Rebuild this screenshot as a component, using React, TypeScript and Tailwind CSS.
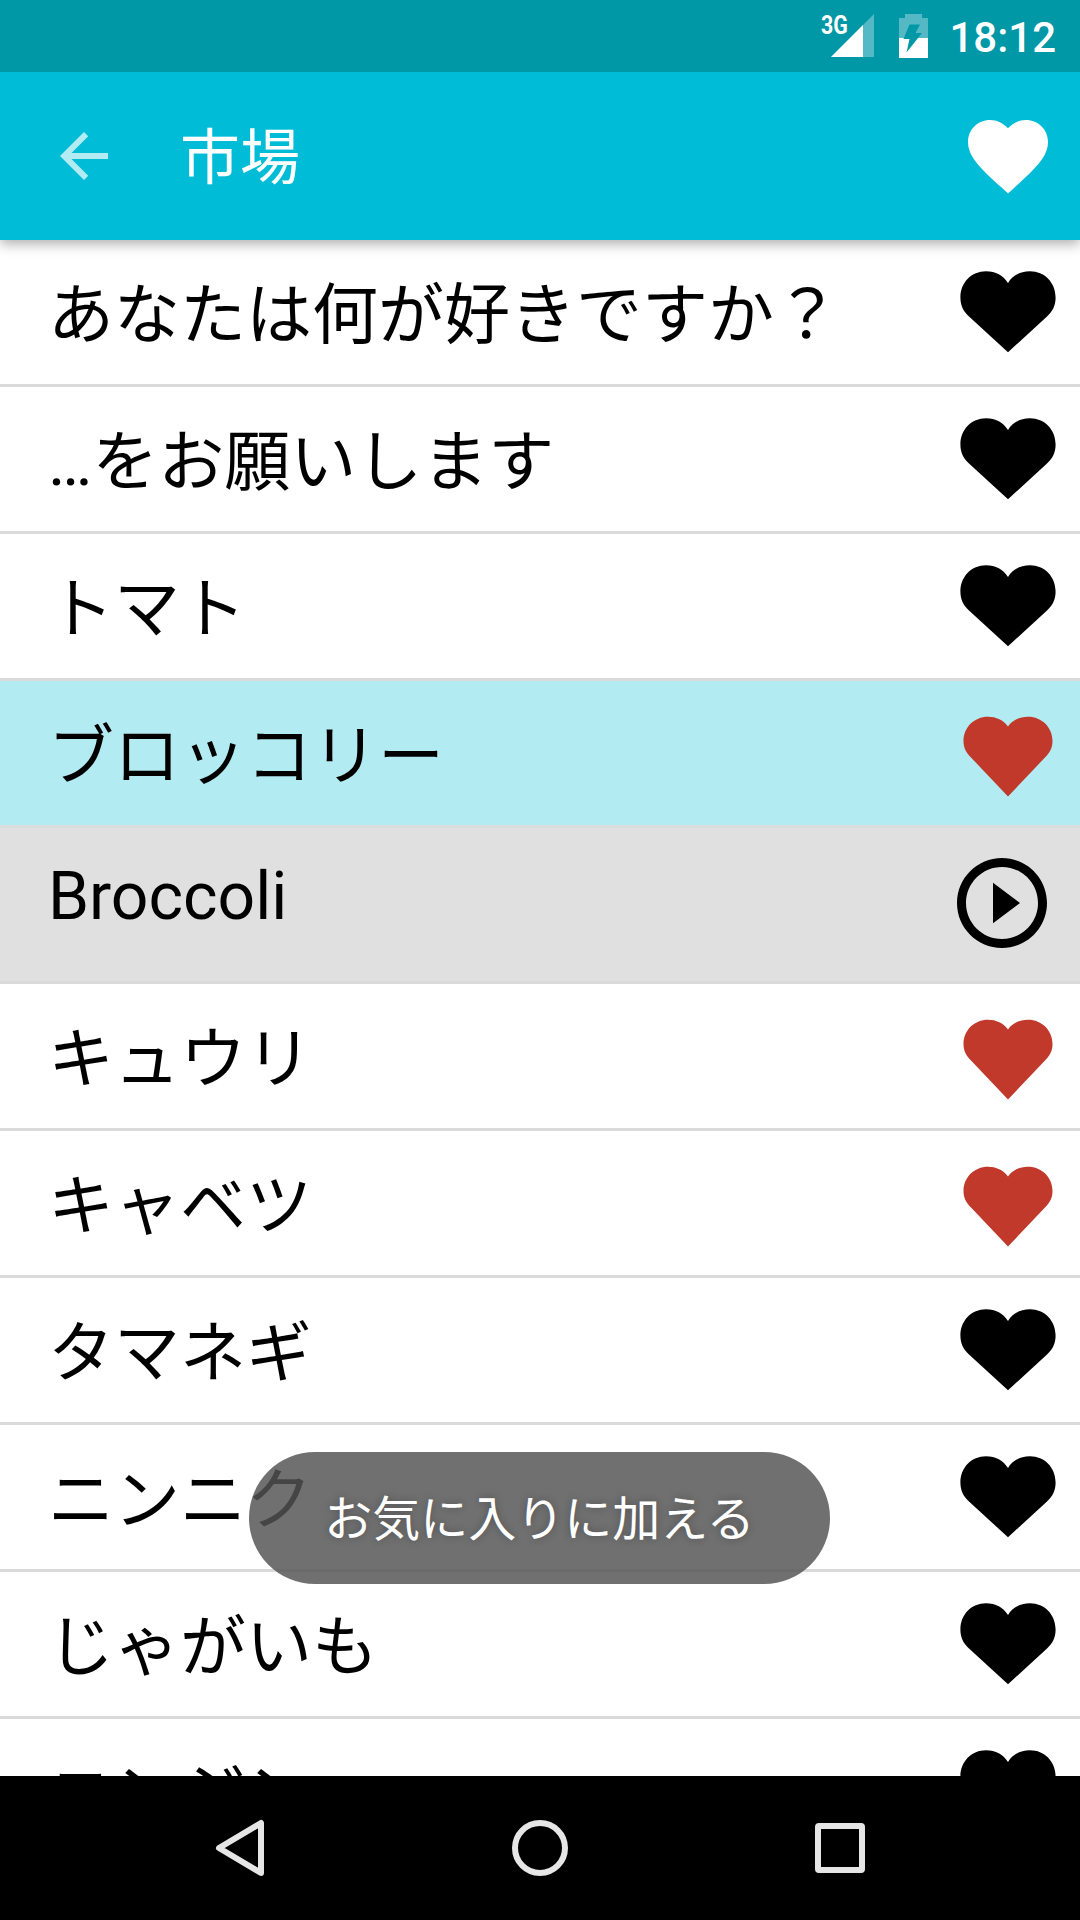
const items = [
    { text: "あなたは何が好きですか？", fav: false },
    { text: "…をお願いします", fav: false },
    { text: "トマト", fav: false },
    { text: "ブロッコリー", fav: true, translation: "Broccoli" },
    { text: "キュウリ", fav: true },
    { text: "キャベツ", fav: true },
    { text: "タマネギ", fav: false },
    { text: "ニンニク", fav: false },
    { text: "じゃがいも", fav: false },
    { text: "ニンジン", fav: false },
];

function StatusBar() {
    return (
        <div className="relative z-20 flex h-[72px] shrink-0 items-center justify-end bg-[#0097a7] pr-6 text-white">
            <div className="flex h-full items-start">
                <span className="mt-[11px] w-[10px] origin-left scale-x-[0.82] text-[26px] leading-7 font-bold">3G</span>
                <svg className="mt-[14px] h-[43px] w-[43px]" viewBox="0 0 43 43">
                    <path d="M43 0V43H0z" fill="#fff" fillOpacity=".33" />
                    <path d="M32 11V43H0z" fill="#fff" />
                </svg>
            </div>
            <svg className="ml-[25px] h-11 w-[29px]" viewBox="0 0 29 44">
                <path d="M6 0h17v4h6v20H0V4h6z" fill="#fff" fillOpacity=".33" />
                <path d="M0 24h29v20H0z" fill="#fff" />
                <path d="M10.500 10.500H21L16.500 19H23L7.500 38.500L10.500 25H4.500z" fill="#0097a7" />
            </svg>
            <span className="ml-[21px] pt-[3px] text-[42px] leading-[69px] font-medium">18:12</span>
        </div>
    );
}

function Header() {
    return (
        <header className="relative z-10 flex h-[168px] shrink-0 items-center bg-[#00bcd7] px-6 shadow-[0_4px_12px_rgba(0,0,0,0.32)]">
            <svg className="ml-6 h-[72px] w-[72px]" viewBox="0 0 24 24" fill="#fff" fillOpacity=".7">
                <path d="M20 11H7.830l5.590-5.590L12 4l-8 8 8 8 1.410-1.410L7.830 13H20v-2z" />
            </svg>
            <h1 className="ml-[60px] grow pt-[6px] text-[60px] leading-[84px] text-white">市場</h1>
            <svg className="h-24 w-24" viewBox="0 0 24 24" fill="#fff">
                <path d="M12 21.350l-1.450-1.320C5.400 15.360 2 12.280 2 8.500 2 5.420 4.420 3 7.500 3c1.740 0 3.410.810 4.500 2.090C13.090 3.810 14.760 3 16.500 3 19.580 3 22 5.420 22 8.500c0 3.780-3.400 6.860-8.550 11.540L12 21.350z" />
            </svg>
        </header>
    );
}

function Heart({ fav }: { fav: boolean }) {
    if (fav) {
        return (
            <svg className="mt-[35px] h-[82px] w-24" viewBox="0 0 96 82" fill="#c0392b">
                <path d="M48 80.500L11.500 42C6 36.500 3.500 32 3.500 25C3.500 11.500 14 .7 28 .7C36 .7 43.500 4 48 10.500C52.500 4 60 .7 68 .7C82 .7 92.500 11.500 92.500 25C92.500 32 90 36.500 84.500 42z" />
            </svg>
        );
    }
    return (
        <svg className="mt-[30px] h-[84px] w-24" viewBox="0 0 96 84" fill="#000">
            <path d="M48 82.300L9 46.500C3.500 41.500 .4 35.500 .4 27.500C.4 12.500 11.500 1.200 26 1.200C35.500 1.200 43.500 5.500 48 13C52.500 5.500 60.500 1.200 70 1.200C84.500 1.200 95.600 12.500 95.600 27.500C95.600 35.500 92.500 41.500 87 46.500z" />
        </svg>
    );
}

function Translation({ text }: { text: string }) {
    return (
        <div className="flex h-[156px] shrink-0 items-start justify-between border-b-3 border-[#dadada] bg-[#e0e0e0] pr-6 pl-12">
            <span className="mt-[30px] text-[66px] leading-[77px]">{text}</span>
            <svg className="mt-[21px] h-[108px] w-[108px]" viewBox="0 0 24 24">
                <path d="M10 16.500l6-4.500-6-4.500v9zM12 2C6.480 2 2 6.480 2 12s4.480 10 10 10 10-4.480 10-10S17.520 2 12 2zm0 18c-4.410 0-8-3.590-8-8s3.590-8 8-8 8 3.590 8 8-3.590 8-8 8z" />
            </svg>
        </div>
    );
}

function NavBar() {
    return (
        <nav className="flex h-36 shrink-0 items-center justify-center gap-[222px] bg-black">
            <svg className="h-[60px] w-[78px]" viewBox="0 0 78 60" fill="none" stroke="#e6e6e6" strokeWidth="6" strokeLinejoin="round">
                <path d="M60 5V55L18 30z" />
            </svg>
            <svg className="h-[60px] w-[78px]" viewBox="0 0 78 60" fill="none" stroke="#e6e6e6" strokeWidth="6">
                <circle cx="39" cy="30" r="25" />
            </svg>
            <svg className="h-[60px] w-[78px]" viewBox="0 0 78 60" fill="none" stroke="#e6e6e6" strokeWidth="6">
                <rect x="17" y="8" width="44" height="44" rx="1" />
            </svg>
        </nav>
    );
}

export default function App() {
    return (
        <div
            lang="ja"
            className="relative flex h-[1920px] w-[1080px] flex-col overflow-hidden bg-white font-['Roboto','Noto_Sans_CJK_JP',sans-serif] text-black"
        >
            <StatusBar />
            <Header />

            <main className="flex min-h-0 grow flex-col overflow-hidden">
                {items.map((item) => (
                    <div key={item.text} className="shrink-0">
                        <div
                            className={`flex h-[147px] items-start justify-between border-b-3 pr-6 pl-12 ${
                                item.translation ? "border-[#dadddd] bg-[#b2ebf2]" : "border-[#dadada] bg-white"
                            }`}
                        >
                            <span className="pt-[4px] text-[66px] leading-[144px] whitespace-nowrap">{item.text}</span>
                            <Heart fav={item.fav} />
                        </div>
                        {item.translation && <Translation text={item.translation} />}
                    </div>
                ))}
            </main>

            <NavBar />

            <div className="absolute top-[1452px] left-[249px] flex h-[132px] w-[581px] items-center justify-center rounded-full bg-[#535353]/83">
                <span className="pt-[4px] text-[48px] leading-[72px] whitespace-nowrap text-white [text-shadow:0_0_8px_rgba(0,0,0,0.3)]">
                    お気に入りに加える
                </span>
            </div>
        </div>
    );
}
